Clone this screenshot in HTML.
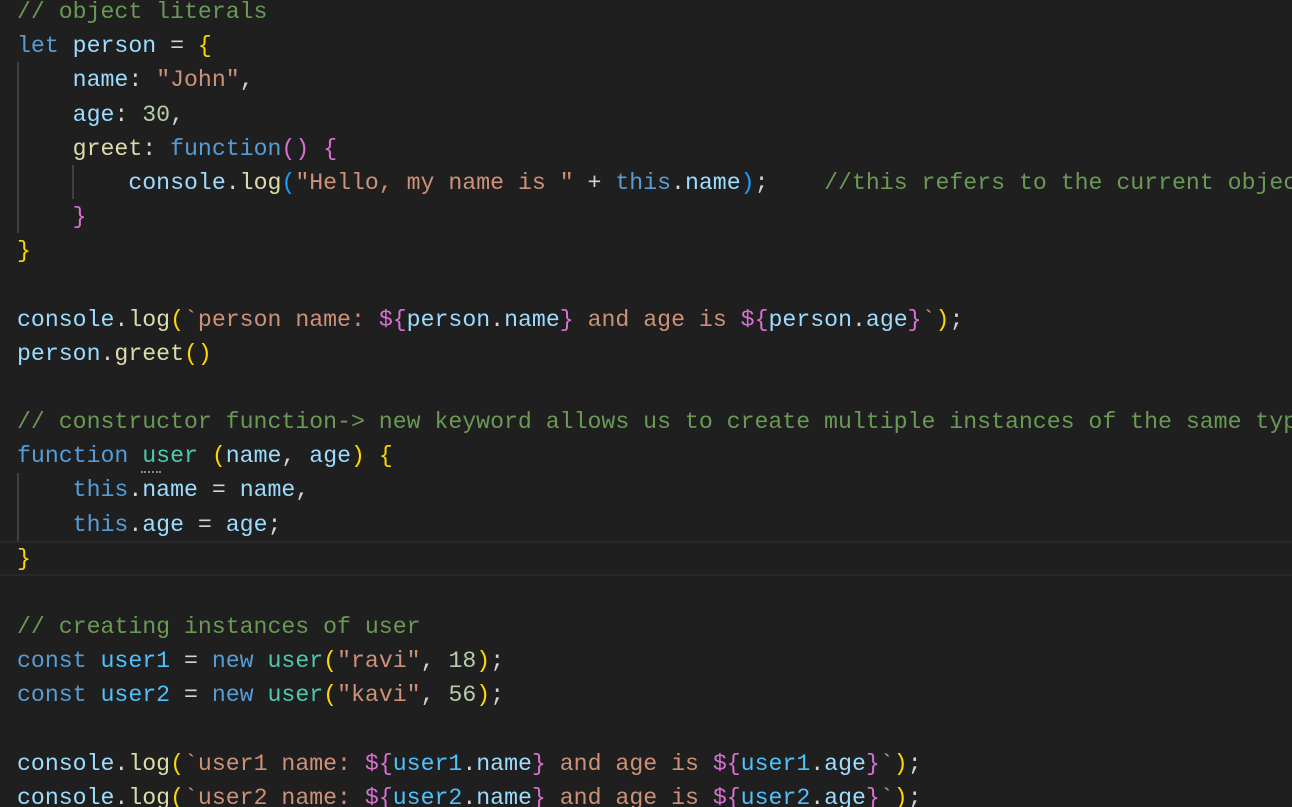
<!DOCTYPE html>
<html><head><meta charset="utf-8"><style>
html,body{margin:0;padding:0;background:#1f1f1f;width:1292px;height:807px;overflow:hidden;}
#ed{position:absolute;left:0;top:0;width:1292px;height:807px;overflow:hidden;}
pre{position:absolute;left:17px;top:-5px;margin:0;font-family:"Liberation Mono",monospace;font-size:23.2px;line-height:34.17px;color:#d4d4d4;white-space:pre;}
.c{color:#6a9955}.k{color:#569cd6}.v{color:#9cdcfe}.s{color:#ce9178}.n{color:#b5cea8}.f{color:#dcdcaa}
.y{color:#ffd700}.p{color:#da70d6}.b{color:#179fff}.t{color:#4ec9b0}.o{color:#4fc1ff}
.g{position:absolute;width:2px;background:#404040;}
.cur{position:absolute;left:0;width:1292px;top:541px;height:31px;border-top:2px solid #282828;border-bottom:2px solid #282828;}
.dots{position:absolute;left:141px;top:471px;width:20px;border-top:2px dotted #8a8a8a;}
</style></head><body><div id="ed">
<div class="cur"></div>
<div class="g" style="left:17px;top:62px;height:171px"></div>
<div class="g" style="left:72px;top:165px;height:34px"></div>
<div class="g" style="left:17px;top:473px;height:68px"></div>
<div class="dots"></div>
<pre><span class="c">// object literals</span>
<span class="k">let</span> <span class="v">person</span> = <span class="y">{</span>
    <span class="v">name</span>: <span class="s">"John"</span>,
    <span class="v">age</span>: <span class="n">30</span>,
    <span class="f">greet</span>: <span class="k">function</span><span class="p">()</span> <span class="p">{</span>
        <span class="v">console</span>.<span class="f">log</span><span class="b">(</span><span class="s">"Hello, my name is "</span> + <span class="k">this</span>.<span class="v">name</span><span class="b">)</span>;    <span class="c">//this refers to the current object</span>
    <span class="p">}</span>
<span class="y">}</span>

<span class="v">console</span>.<span class="f">log</span><span class="y">(</span><span class="s">`person name: </span><span class="p">${</span><span class="v">person</span>.<span class="v">name</span><span class="p">}</span><span class="s"> and age is </span><span class="p">${</span><span class="v">person</span>.<span class="v">age</span><span class="p">}</span><span class="s">`</span><span class="y">)</span>;
<span class="v">person</span>.<span class="f">greet</span><span class="y">()</span>

<span class="c">// constructor function-&gt; new keyword allows us to create multiple instances of the same type</span>
<span class="k">function</span> <span class="t">user</span> <span class="y">(</span><span class="v">name</span>, <span class="v">age</span><span class="y">)</span> <span class="y">{</span>
    <span class="k">this</span>.<span class="v">name</span> = <span class="v">name</span>,
    <span class="k">this</span>.<span class="v">age</span> = <span class="v">age</span>;
<span class="y">}</span>

<span class="c">// creating instances of user</span>
<span class="k">const</span> <span class="o">user1</span> = <span class="k">new</span> <span class="t">user</span><span class="y">(</span><span class="s">"ravi"</span>, <span class="n">18</span><span class="y">)</span>;
<span class="k">const</span> <span class="o">user2</span> = <span class="k">new</span> <span class="t">user</span><span class="y">(</span><span class="s">"kavi"</span>, <span class="n">56</span><span class="y">)</span>;

<span class="v">console</span>.<span class="f">log</span><span class="y">(</span><span class="s">`user1 name: </span><span class="p">${</span><span class="o">user1</span>.<span class="v">name</span><span class="p">}</span><span class="s"> and age is </span><span class="p">${</span><span class="o">user1</span>.<span class="v">age</span><span class="p">}</span><span class="s">`</span><span class="y">)</span>;
<span class="v">console</span>.<span class="f">log</span><span class="y">(</span><span class="s">`user2 name: </span><span class="p">${</span><span class="o">user2</span>.<span class="v">name</span><span class="p">}</span><span class="s"> and age is </span><span class="p">${</span><span class="o">user2</span>.<span class="v">age</span><span class="p">}</span><span class="s">`</span><span class="y">)</span>;</pre>
</div></body></html>
